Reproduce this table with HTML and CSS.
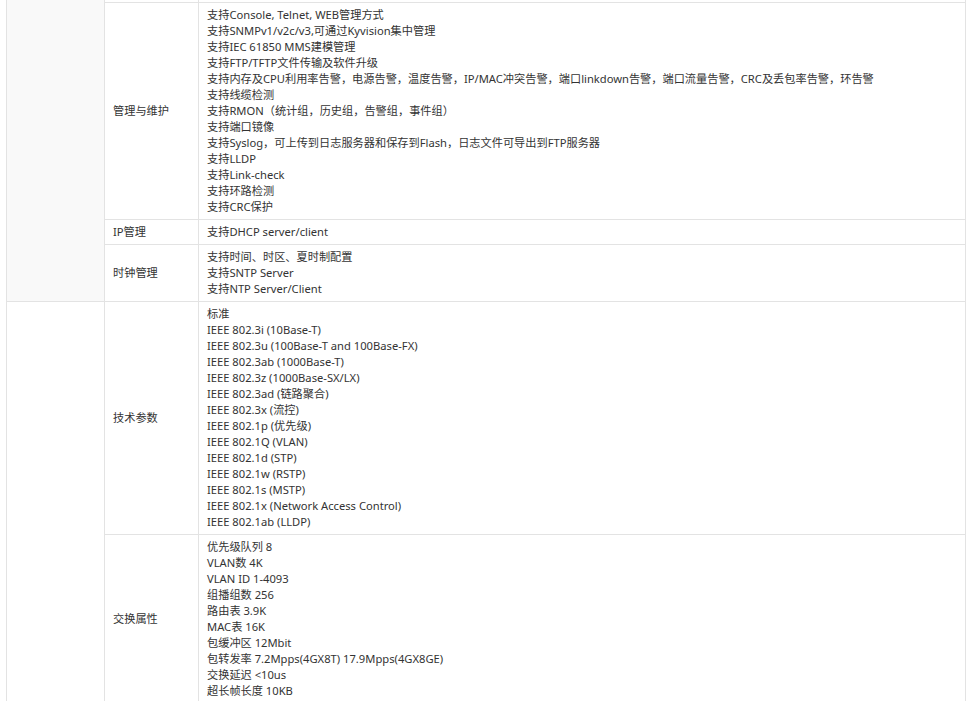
FILE: index.html
```html
<!DOCTYPE html>
<html lang="zh-CN">
<head>
<meta charset="utf-8">
<title>技术规格</title>
<link rel="stylesheet" href="styles.css">
</head>
<body>
<div class="spec">
  <div class="cat cat-shaded"></div>
  <div class="k tail"></div>
  <div class="v tail"></div>

  <div class="k">管理与维护</div>
  <div class="v">
    <div>支持Console, Telnet, WEB管理方式</div>
    <div>支持SNMPv1/v2c/v3,可通过Kyvision集中管理</div>
    <div>支持IEC 61850 MMS建模管理</div>
    <div>支持FTP/TFTP文件传输及软件升级</div>
    <div>支持内存及CPU利用率告警，电源告警，温度告警，IP/MAC冲突告警，端口linkdown告警，端口流量告警，CRC及丢包率告警，环告警</div>
    <div>支持线缆检测</div>
    <div>支持RMON（统计组，历史组，告警组，事件组）</div>
    <div>支持端口镜像</div>
    <div>支持Syslog，可上传到日志服务器和保存到Flash，日志文件可导出到FTP服务器</div>
    <div>支持LLDP</div>
    <div>支持Link-check</div>
    <div>支持环路检测</div>
    <div>支持CRC保护</div>
  </div>

  <div class="k">IP管理</div>
  <div class="v">
    <div>支持DHCP server/client</div>
  </div>

  <div class="k">时钟管理</div>
  <div class="v">
    <div>支持时间、时区、夏时制配置</div>
    <div>支持SNTP Server</div>
    <div>支持NTP Server/Client</div>
  </div>

  <div class="cat cat-plain"></div>
  <div class="k">技术参数</div>
  <div class="v">
    <div>标准</div>
    <div>IEEE 802.3i (10Base-T)</div>
    <div>IEEE 802.3u (100Base-T and 100Base-FX)</div>
    <div>IEEE 802.3ab (1000Base-T)</div>
    <div>IEEE 802.3z (1000Base-SX/LX)</div>
    <div>IEEE 802.3ad (链路聚合)</div>
    <div>IEEE 802.3x (流控)</div>
    <div>IEEE 802.1p (优先级)</div>
    <div>IEEE 802.1Q (VLAN)</div>
    <div>IEEE 802.1d (STP)</div>
    <div>IEEE 802.1w (RSTP)</div>
    <div>IEEE 802.1s (MSTP)</div>
    <div>IEEE 802.1x (Network Access Control)</div>
    <div>IEEE 802.1ab (LLDP)</div>
  </div>

  <div class="k">交换属性</div>
  <div class="v">
    <div>优先级队列 8</div>
    <div>VLAN数 4K</div>
    <div>VLAN ID 1-4093</div>
    <div>组播组数 256</div>
    <div>路由表 3.9K</div>
    <div>MAC表 16K</div>
    <div>包缓冲区 12Mbit</div>
    <div>包转发率 7.2Mpps(4GX8T) 17.9Mpps(4GX8GE)</div>
    <div>交换延迟 &lt;10us</div>
    <div>超长帧长度 10KB</div>
  </div>
</div>
</body>
</html>
```
FILE: styles.css
```css
html, body {
  margin: 0;
  padding: 0;
  background: #ffffff;
}

body {
  font-family: "Noto Sans", "Noto Sans CJK SC", sans-serif;
  font-size: 11.2px;
  line-height: 16px;
  color: #333333;
}

.spec {
  display: grid;
  grid-template-columns: 98px 94px 767px;
  margin-left: 6px;
  border-left: 1px solid #e3e3e3;
  width: 960px;
  box-sizing: border-box;
}

.cat {
  border-right: 1px solid #e3e3e3;
  border-bottom: 1px solid #e3e3e3;
}

.cat-shaded {
  grid-row: span 4;
  background: #f9f9f9;
}

.cat-plain {
  grid-row: span 2;
}

.k {
  display: flex;
  align-items: center;
  padding: 4px 8px;
  border-right: 1px solid #e3e3e3;
  border-bottom: 1px solid #e3e3e3;
  white-space: nowrap;
}

.v {
  padding: 4px 8px;
  border-right: 1px solid #e3e3e3;
  border-bottom: 1px solid #e3e3e3;
  white-space: nowrap;
}

.tail {
  height: 3px;
  padding: 0;
  box-sizing: border-box;
}
```
